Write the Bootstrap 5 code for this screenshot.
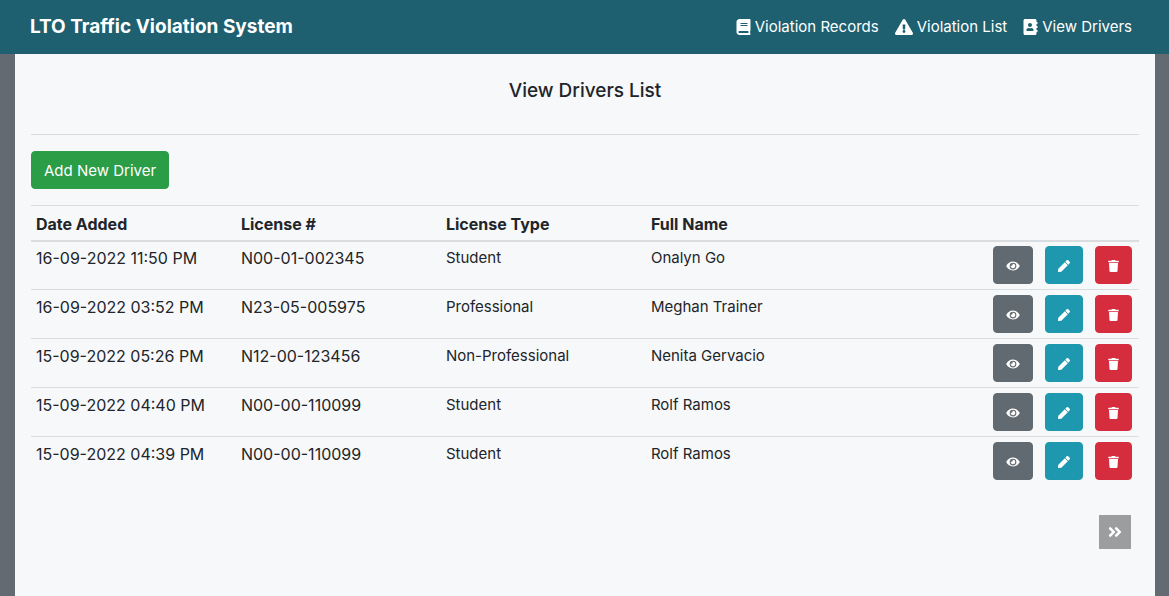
<!DOCTYPE html>
<html lang="en">
<head>
<meta charset="utf-8">
<meta name="viewport" content="width=device-width, initial-scale=1">
<title>LTO Traffic Violation System</title>
<link href="https://cdn.jsdelivr.net/npm/bootstrap@5.3.0/dist/css/bootstrap.min.css" rel="stylesheet">
<style>
  body { font-family: Inter, "Liberation Sans", sans-serif; font-size: 15px; line-height: 24px; color: #212529; background: #636a72; }
  .topbar { background: #1e5f70; min-height: 54px; padding: 0 29px 0 30px; }
  .topbar .navbar-brand { font-size: 19px; font-weight: 700; line-height: 30px; padding: 0; color: #fff; }
  .topbar .nav-link { color: #fff; padding: 0 8px; }
  .icon { fill: currentColor; flex: none; height: 16px; }
  .panel { background: #f7f8fa; margin: 0 14px 0 15px; padding: 25px 16px; }
  .page-title { font-size: 19px; line-height: 24px; font-weight: 500; }
  .rule { border-color: #d9dcdf; opacity: 1; margin: 31px 0 16px; }
  .btn { font-size: 15px; line-height: 24px; padding: 6px 12px; border-radius: 4px; color: #fff; }
  .btn:hover { color: #fff; }
  .btn-add { background: #2b9d46; border-color: #2b9d46; padding: 7px 12px 5px; }
  .btn-view { background: #626a71; border-color: #626a71; }
  .btn-edit { background: #1d98ae; border-color: #1d98ae; }
  .btn-remove { background: #d52d3e; border-color: #d52d3e; }
  .btn-tool { height: 38px; display: flex; align-items: center; padding: 2px 12px 0; }
  .btn-tool .icon { height: 12px; }
  .drivers { border-collapse: separate; border-spacing: 0; table-layout: fixed; width: 100%; }
  .drivers .col-data { width: 18.5%; }
  .drivers th { border-top: 1px solid #d9dde0; border-bottom: 2px solid #d9dde0; padding: 6px 5px 4px; font-size: 16px; }
  .drivers td { border-top: 1px solid #d9dde0; padding: 5px; vertical-align: top; }
  .drivers .code { font-size: 16px; }
  .drivers tbody tr:first-child td { border-top: 0; padding-top: 4px; }
  .tools { gap: 12px; padding-right: 2px; }
  .pager { padding: 30px 8px 0 0; }
  .btn-next { background: #9c9d9f; color: #fff; border: 0; width: 32px; height: 34px; }
</style>
</head>
<body class="min-vh-100 d-flex flex-column">
<svg class="d-none" aria-hidden="true">
  <symbol id="book" viewBox="0 0 448 512"><path d="M448 360V24c0-13.3-10.7-24-24-24H96C43 0 0 43 0 96v320c0 53 43 96 96 96h328c13.3 0 24-10.7 24-24v-16c0-7.5-3.5-14.3-8.9-18.7-4.2-15.4-4.2-59.3 0-74.7 5.4-4.3 8.9-11.1 8.9-18.6zM128 134c0-3.3 2.7-6 6-6h212c3.3 0 6 2.7 6 6v20c0 3.3-2.7 6-6 6H134c-3.3 0-6-2.7-6-6v-20zm0 64c0-3.3 2.7-6 6-6h212c3.3 0 6 2.7 6 6v20c0 3.3-2.7 6-6 6H134c-3.3 0-6-2.7-6-6v-20zm253.4 250H96c-17.7 0-32-14.3-32-32 0-17.6 14.4-32 32-32h285.4c-1.9 17.1-1.9 46.9 0 64z"/></symbol>
  <symbol id="warning" viewBox="0 0 576 512"><path d="M569.517 440.013C587.975 472.007 564.806 512 527.94 512H48.054c-36.937 0-59.999-40.055-41.577-71.987L246.423 23.985c18.467-32.009 64.72-31.951 83.154 0l239.94 416.028zM288 354c-25.405 0-46 20.595-46 46s20.595 46 46 46 46-20.595 46-46-20.595-46-46-46zm-43.673-165.346l7.418 136c.347 6.364 5.609 11.346 11.982 11.346h48.546c6.373 0 11.635-4.982 11.982-11.346l7.418-136c.375-6.874-5.098-12.654-11.982-12.654h-63.383c-6.884 0-12.356 5.78-11.981 12.654z"/></symbol>
  <symbol id="contacts" viewBox="0 0 448 512"><path d="M436 160c6.6 0 12-5.4 12-12v-40c0-6.6-5.4-12-12-12h-20V48c0-26.5-21.5-48-48-48H48C21.5 0 0 21.5 0 48v416c0 26.5 21.5 48 48 48h320c26.5 0 48-21.5 48-48v-48h20c6.6 0 12-5.4 12-12v-40c0-6.6-5.4-12-12-12h-20v-64h20c6.6 0 12-5.4 12-12v-40c0-6.6-5.4-12-12-12h-20v-64h20zm-228-32c35.3 0 64 28.7 64 64s-28.7 64-64 64-64-28.7-64-64 28.7-64 64-64zm112 236.8c0 10.6-10 19.2-22.4 19.2H118.4C106 384 96 375.4 96 364.8v-19.2c0-31.8 30.1-57.6 67.2-57.6h5c12.3 5.1 25.7 8 39.8 8s27.6-2.9 39.8-8h5c37.1 0 67.2 25.8 67.2 57.6v19.2z"/></symbol>
  <symbol id="eye" viewBox="0 0 576 512"><path d="M572.52 241.4C518.29 135.59 410.93 64 288 64S57.68 135.64 3.48 241.41a32.35 32.35 0 0 0 0 29.19C57.71 376.41 165.07 448 288 448s230.32-71.64 284.52-177.41a32.35 32.35 0 0 0 0-29.19zM288 400a144 144 0 1 1 144-144 143.93 143.93 0 0 1-144 144zm0-240a95.31 95.31 0 0 0-25.31 3.79 47.85 47.85 0 0 1-66.9 66.9A95.78 95.78 0 1 0 288 160z"/></symbol>
  <symbol id="pen" viewBox="0 0 512 512"><path d="M290.74 93.24l128.02 128.02-277.99 277.99-114.14 12.6C11.35 513.54-1.56 500.62.14 485.34l12.7-114.22 277.9-277.88zm207.2-19.06l-60.11-60.11c-18.75-18.75-49.16-18.75-67.91 0l-56.55 56.55 128.02 128.02 56.55-56.55c18.75-18.76 18.75-49.16 0-67.91z"/></symbol>
  <symbol id="trash" viewBox="0 0 448 512"><path d="M432 32H312l-9.4-18.7A24 24 0 0 0 281.1 0H166.8a23.72 23.72 0 0 0-21.4 13.3L136 32H16A16 16 0 0 0 0 48v32a16 16 0 0 0 16 16h416a16 16 0 0 0 16-16V48a16 16 0 0 0-16-16zM53.2 467a48 48 0 0 0 47.9 45h245.8a48 48 0 0 0 47.9-45L416 128H32z"/></symbol>
  <symbol id="next" viewBox="0 0 448 512"><path d="M224.3 273l-136 136c-9.4 9.4-24.6 9.4-33.9 0l-22.6-22.6c-9.4-9.4-9.4-24.6 0-33.9l96.4-96.4-96.4-96.4c-9.4-9.4-9.4-24.6 0-33.9L54.3 103c9.4-9.4 24.6-9.4 33.9 0l136 136c9.5 9.4 9.5 24.6.1 34zm192-34l-136-136c-9.4-9.4-24.6-9.4-33.9 0l-22.6 22.6c-9.4 9.4-9.4 24.6 0 33.9l96.4 96.4-96.4 96.4c-9.4 9.4-9.4 24.6 0 33.9l22.6 22.6c9.4 9.4 24.6 9.4 33.9 0l136-136c9.4-9.2 9.4-24.4 0-33.8z"/></symbol>
</svg>

<nav class="navbar topbar d-flex justify-content-between align-items-center">
  <a class="navbar-brand m-0" href="#">LTO Traffic Violation System</a>
  <div class="nav">
    <a class="nav-link d-flex align-items-center gap-1" href="#"><svg class="icon" width="15"><use href="#book"/></svg>Violation Records</a>
    <a class="nav-link d-flex align-items-center gap-1" href="#"><svg class="icon" width="18"><use href="#warning"/></svg>Violation List</a>
    <a class="nav-link d-flex align-items-center gap-1" href="#"><svg class="icon" width="15"><use href="#contacts"/></svg>View Drivers</a>
  </div>
</nav>

<main class="panel flex-grow-1">
  <h1 class="page-title text-center m-0">View Drivers List</h1>
  <hr class="rule">
  <button type="button" class="btn btn-add mb-3">Add New Driver</button>
  <table class="drivers">
    <colgroup><col class="col-data"><col class="col-data"><col class="col-data"><col class="col-data"><col></colgroup>
    <thead>
      <tr><th scope="col">Date Added</th><th scope="col">License #</th><th scope="col">License Type</th><th scope="col">Full Name</th><th></th></tr>
    </thead>
    <tbody id="rows"></tbody>
  </table>
  <div class="pager d-flex justify-content-end">
    <button type="button" class="btn-next d-flex align-items-center justify-content-center p-0" aria-label="Next page"><svg class="icon" width="14"><use href="#next"/></svg></button>
  </div>
</main>

<script src="https://cdn.jsdelivr.net/npm/bootstrap@5.3.0/dist/js/bootstrap.bundle.min.js"></script>
<script>
  const drivers = [
    ['16-09-2022 11:50 PM', 'N00-01-002345', 'Student', 'Onalyn Go'],
    ['16-09-2022 03:52 PM', 'N23-05-005975', 'Professional', 'Meghan Trainer'],
    ['15-09-2022 05:26 PM', 'N12-00-123456', 'Non-Professional', 'Nenita Gervacio'],
    ['15-09-2022 04:40 PM', 'N00-00-110099', 'Student', 'Rolf Ramos'],
    ['15-09-2022 04:39 PM', 'N00-00-110099', 'Student', 'Rolf Ramos']
  ];
  const tool = (kind, icon, width, label) =>
    `<button type="button" class="btn btn-tool btn-${kind}" aria-label="${label}"><svg class="icon" width="${width}"><use href="#${icon}"/></svg></button>`;
  document.getElementById('rows').innerHTML = drivers.map(([date, license, type, name]) =>
    `<tr><td class="code">${date}</td><td class="code">${license}</td><td>${type}</td><td>${name}</td>` +
    '<td><div class="tools d-flex justify-content-end">' +
    tool('view', 'eye', 14, 'View') + tool('edit', 'pen', 12, 'Edit') + tool('remove', 'trash', 11, 'Delete') +
    '</div></td></tr>').join('');
</script>
</body>
</html>
